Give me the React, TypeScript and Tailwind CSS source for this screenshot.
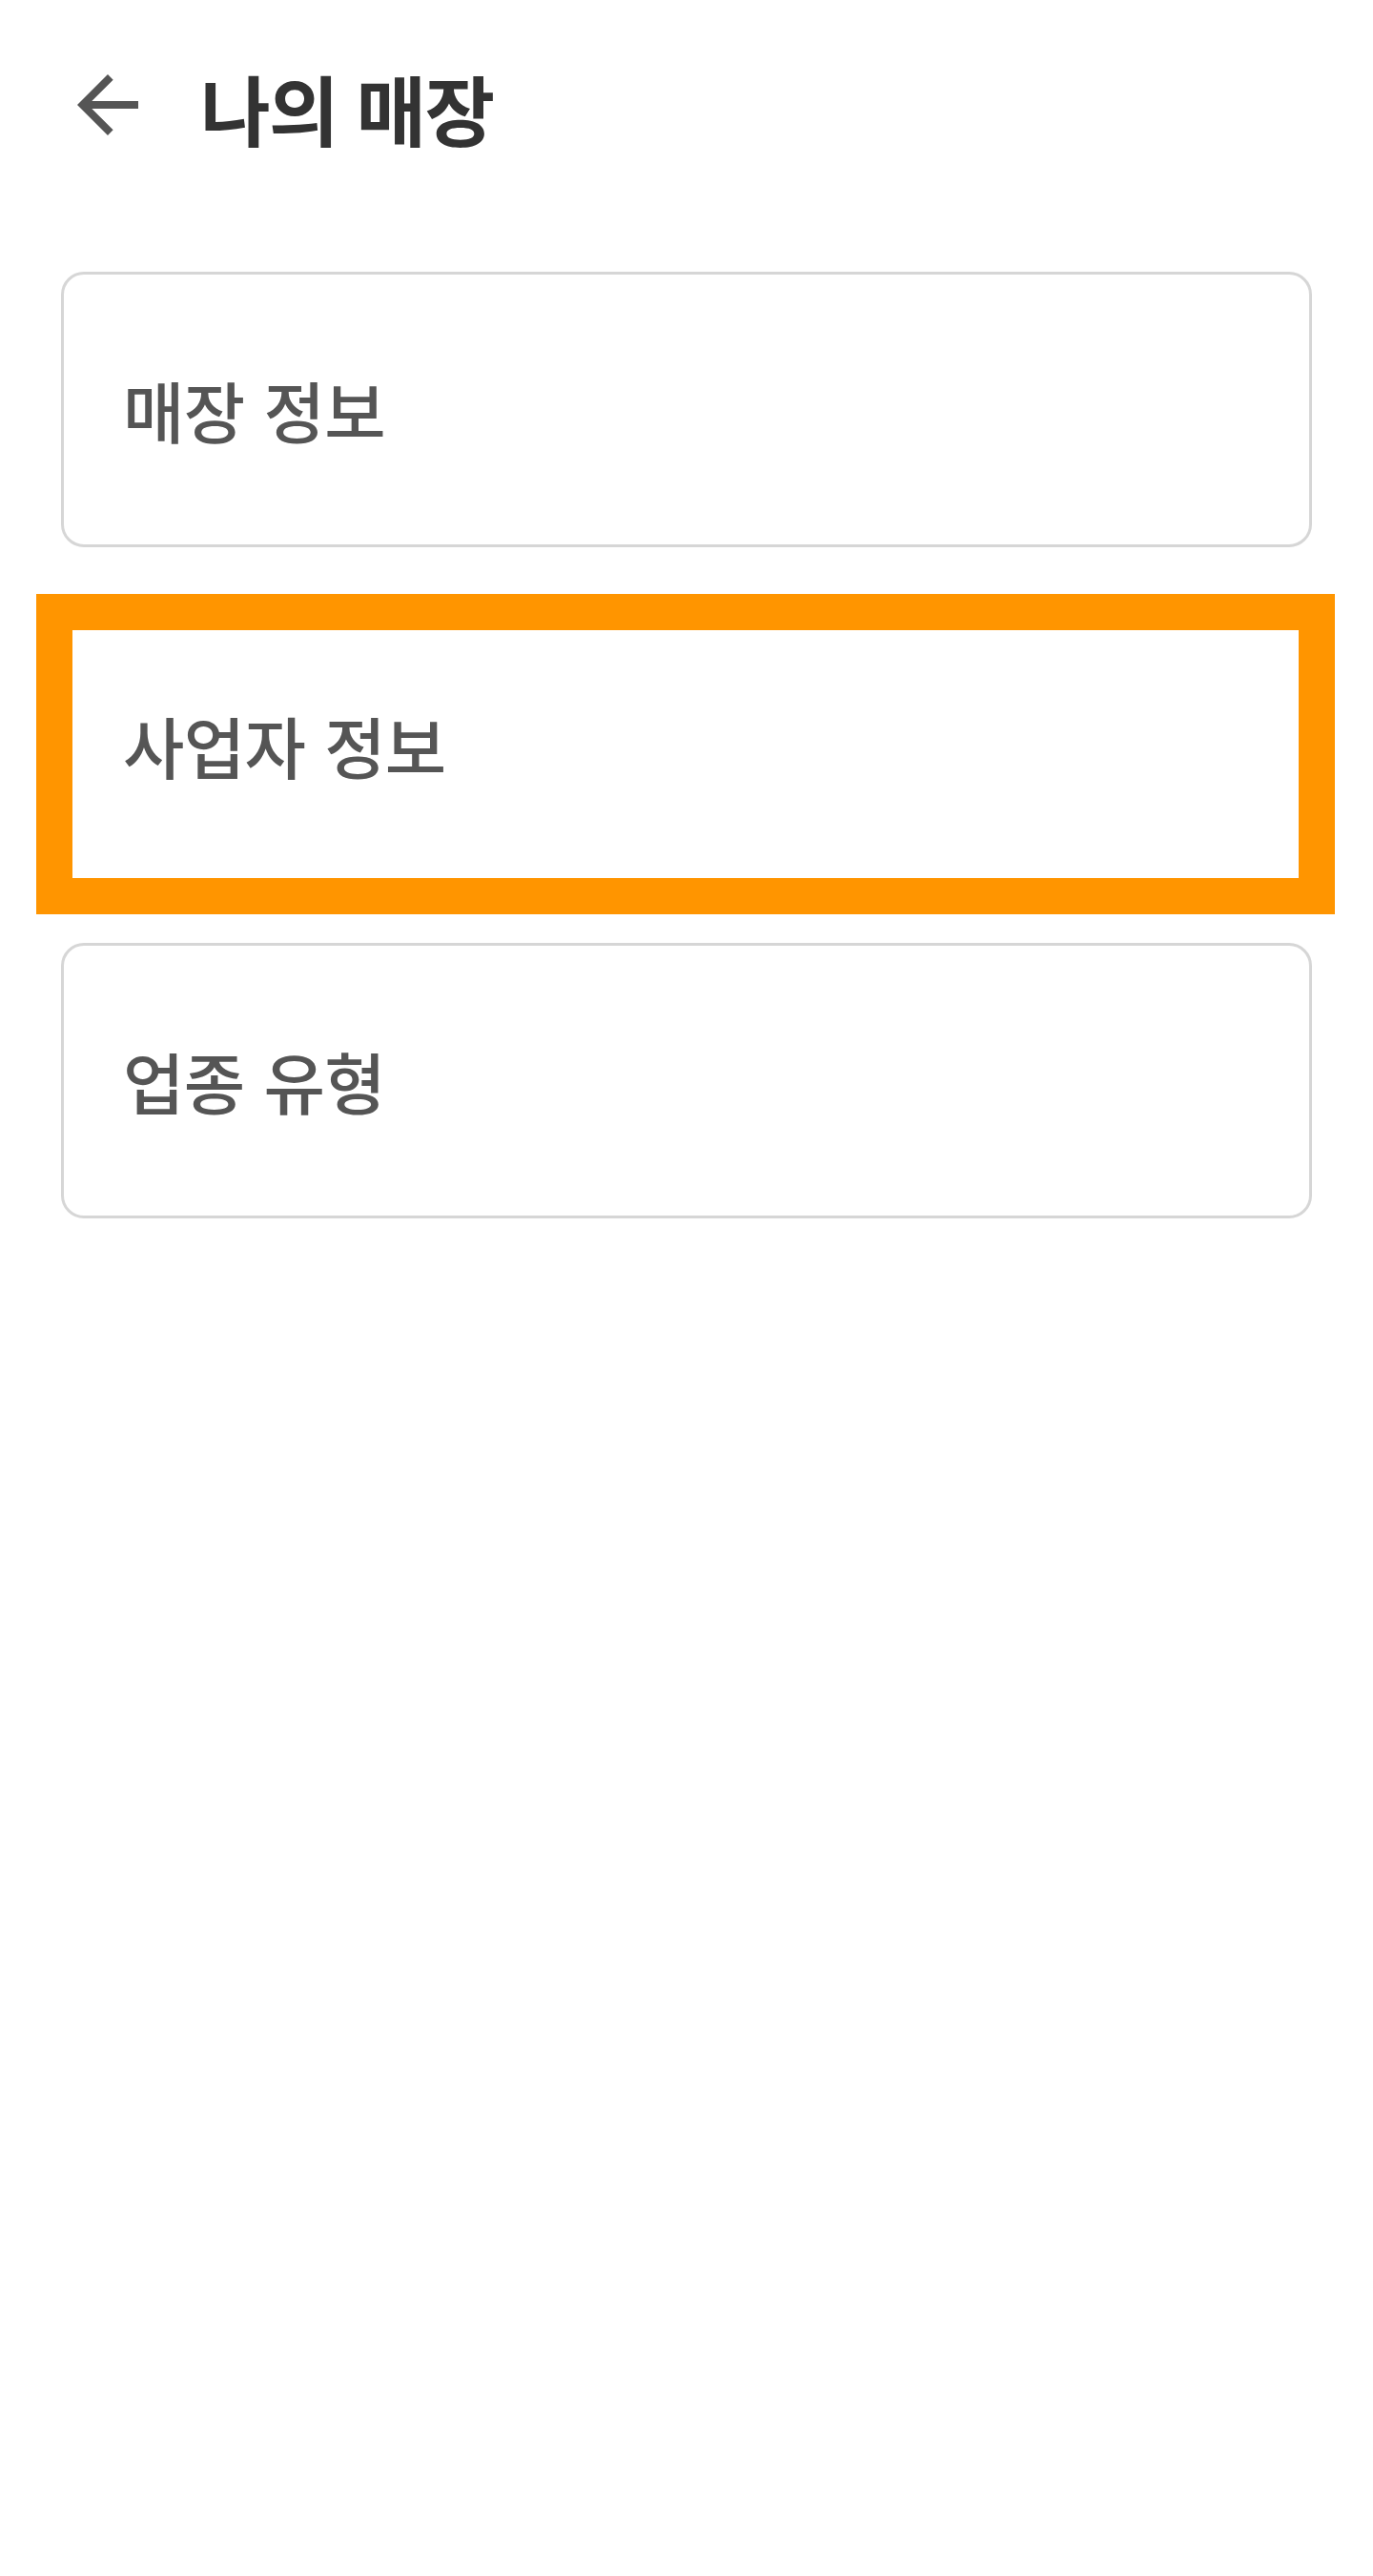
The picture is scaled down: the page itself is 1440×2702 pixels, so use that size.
import React from "react";

const font = { fontFamily: '"Noto Sans CJK KR", "Noto Sans", sans-serif' };

function Card({ label, highlight = false }: { label: string; highlight?: boolean }) {
  return (
    <div className="relative">
      <div
        className={`flex h-[289px] items-center rounded-[24px] border-[3px] ${
          highlight ? "border-transparent" : "border-[#d6d6d6]"
        } bg-white pl-[62px]`}
      >
        <span className="text-[70px] font-medium leading-none tracking-[-0.01em] text-[#555555] [word-spacing:5px]">
          {label}
        </span>
      </div>
      {highlight && (
        <div className="pointer-events-none absolute bottom-[-33px] left-[-26px] right-[-24px] top-[-14px] border-[38px] border-[#ff9500]" />
      )}
    </div>
  );
}

export default function App() {
  return (
    <div className="min-h-[2702px] w-full bg-white" style={font}>
      <header className="flex items-center pl-[65px] pt-[62px]">
        <svg width="96" height="96" viewBox="0 0 24 24" fill="#555555" aria-hidden="true">
          <path d="M20 11H7.83l5.59-5.59L12 4l-8 8 8 8 1.41-1.41L7.83 13H20v-2z" />
        </svg>
        <h1 className="ml-[49px] mt-[4px] text-[80px] font-bold leading-none tracking-[-0.02em] text-[#333333] [word-spacing:3px]">
          나의 매장
        </h1>
      </header>
      <main className="flex flex-col gap-[63px] px-[64px] pt-[127px]">
        <Card label="매장 정보" />
        <Card label="사업자 정보" highlight />
        <Card label="업종 유형" />
      </main>
    </div>
  );
}
